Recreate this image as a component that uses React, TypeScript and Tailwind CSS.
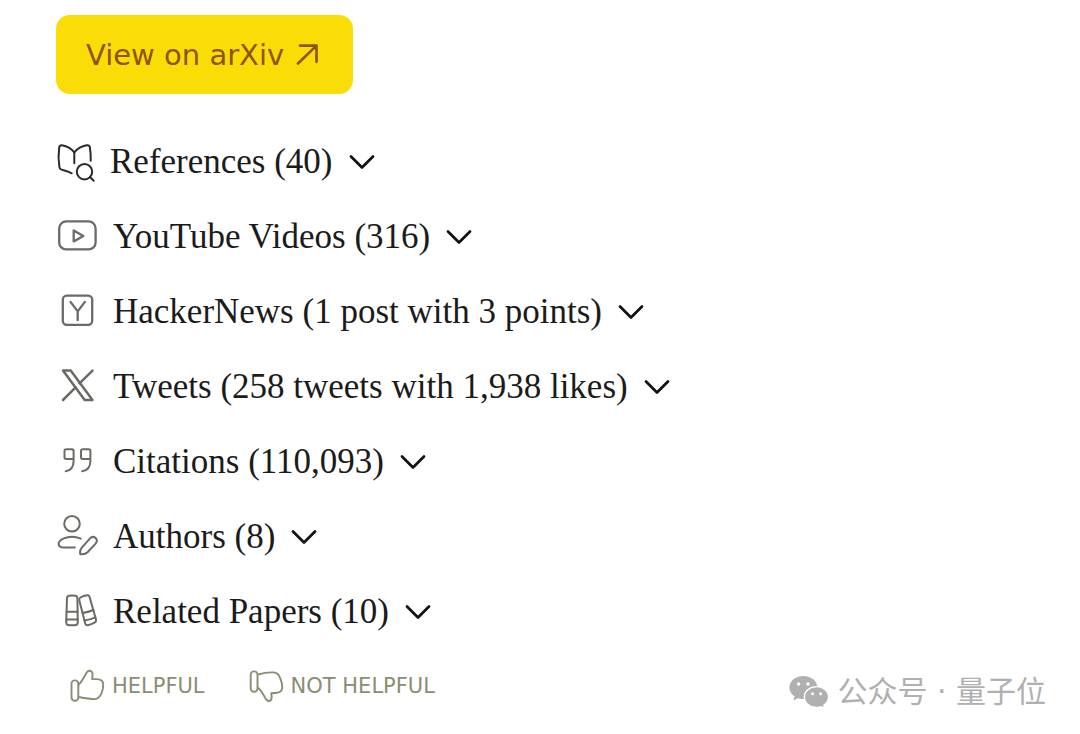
import type { ReactNode } from 'react'

type Section = {
  label: string
  icon: ReactNode
  dark?: boolean
}

const SECTIONS: Section[] = [
  {
    label: 'References (40)',
    dark: true,
    icon: (
      <>
        <path d="M15.7 33.3 C12 31 8 30.6 5 29.4 Q3.6 28.8 3.4 27 C2.2 20 2.3 14 3.2 7.5 Q3.6 5 6 5.2 C10.5 6 15 8.2 18.3 12.3 C21.6 8.2 26 6 30.7 5.2 Q33.4 4.8 33.9 7.4 C34.6 12 34.9 16 34.7 20.7" />
        <path d="M18.3 12.3 V23.3" />
        <circle cx="28.5" cy="31.7" r="7.7" />
        <path d="M34 37 L37.7 40.7" />
      </>
    ),
  },
  {
    label: 'YouTube Videos (316)',
    icon: (
      <g strokeWidth="2.3">
        <rect x="3.2" y="6.4" width="36.4" height="28" rx="7" />
        <path d="M17.7 15.4 V26.4 L27.3 20.9 Z" />
      </g>
    ),
  },
  {
    label: 'HackerNews (1 post with 3 points)',
    icon: (
      <g strokeWidth="2.3">
        <rect x="6.8" y="5.6" width="29.4" height="29.2" rx="4" />
        <path d="M14.5 11.9 L21.7 21.4 L28.9 11.9 M21.7 21.4 V30.2" />
      </g>
    ),
  },
  {
    label: 'Tweets (258 tweets with 1,938 likes)',
    icon: (
      <g strokeWidth="2.5">
        <path d="M7 5.6 H14.7 L36.5 35 H28.7 Z" />
        <path d="M36.5 5.6 L23.5 18.4 M7 35 L19.6 22.4" />
      </g>
    ),
  },
  {
    label: 'Citations (110,093)',
    icon: (
      <>
        <path d="M17.6 18.9 H10.2 Q8.5 18.9 8.5 17.2 V11 Q8.5 9.2 10.2 9.2 H15.9 Q17.6 9.2 17.6 11 V21 C17.6 27.5 15 30.4 9.7 31.2" />
        <path d="M34.4 18.9 H26.7 Q25 18.9 25 17.2 V11 Q25 9.2 26.7 9.2 H32.7 Q34.4 9.2 34.4 11 V21 C34.4 27.5 31.6 30.4 26.2 31.2" />
      </>
    ),
  },
  {
    label: 'Authors (8)',
    icon: (
      <>
        <circle cx="16" cy="8.8" r="7.8" />
        <path d="M24.7 23.6 C19 21.2 13 21.2 8 23.3 C4.5 24.8 2.6 26.6 2.6 28.8 C2.6 31.4 4.4 32.6 8 32.6 H18.8" />
        <path d="M24.3 39.2 C23.8 36.8 24.2 34.6 25.8 32.6 L33.8 23.6 C35.6 21.6 38 21.6 39.6 23 C41.2 24.5 41.2 26.6 39.6 28.6 L31.8 37 C30 38.8 27.2 39.6 24.3 39.2 Z" />
      </>
    ),
  },
  {
    label: 'Related Papers (10)',
    icon: (
      <>
        <path d="M11 8 Q11.1 6.2 12.8 5.8 Q16 5 19.6 5.8 Q21.3 6.2 21.4 8 L21.8 32.6 Q21.8 34.5 20 34.9 Q16 35.8 12 34.9 Q10.2 34.5 10.2 32.6 Z" />
        <path d="M10.6 21.8 H21.6 M10.4 29.6 H21.7" />
        <path d="M23.3 10.2 Q22.9 8.4 24.4 7.5 Q27.6 5.6 31.2 5.2 Q33 5 33.5 6.8 L40 29.6 Q40.4 31.4 38.9 32.3 Q35.5 34.4 31.6 35.2 Q29.8 35.4 29.3 33.7 Z" />
        <path d="M26.5 23 Q32 22.3 37.4 20 M28.4 30.4 Q34 29.8 39.4 27.4" />
      </>
    ),
  },
]

function SectionRow({ label, icon, dark }: Section) {
  return (
    <button
      type="button"
      aria-expanded={false}
      className="flex h-[75px] cursor-pointer items-center text-left"
    >
      <svg
        viewBox="0 0 42 43"
        fill="none"
        strokeWidth="2"
        strokeLinecap="round"
        strokeLinejoin="round"
        aria-hidden="true"
        className={`h-[43px] w-[42px] shrink-0 ${dark ? 'stroke-[#2a2a2a]' : 'stroke-[#6b6a65]'}`}
      >
        {icon}
      </svg>
      <span className={`text-[35px] leading-10 text-[#1b1b1b] ${dark ? 'ml-3' : 'ml-[15px]'}`}>{label}</span>
      <svg
        viewBox="0 0 26 16"
        fill="none"
        strokeWidth="2.7"
        strokeLinecap="round"
        strokeLinejoin="round"
        aria-hidden="true"
        className="ml-4 h-4 w-[26px] shrink-0 stroke-[#111111]"
      >
        <path d="M2 2.5 L13 13.5 L24 2.5" />
      </svg>
    </button>
  )
}

function VoteButton({ label, children }: { label: string; children: ReactNode }) {
  return (
    <button type="button" className="flex cursor-pointer items-center gap-[7px] text-[#8b8d72]">
      <svg
        viewBox="0 0 35 36"
        fill="none"
        stroke="currentColor"
        strokeWidth="1.9"
        strokeLinejoin="round"
        aria-hidden="true"
        className="h-9 w-[35px] shrink-0"
      >
        {children}
      </svg>
      <span className="font-['DejaVu_Sans',sans-serif] text-[21px] leading-7">{label}</span>
    </button>
  )
}

function Watermark() {
  return (
    <div className="flex items-center gap-2 pt-2 text-[#b0b0b0]">
      <svg viewBox="0 0 40 36" aria-hidden="true" className="h-9 w-10 shrink-0" fill="currentColor">
        <path d="M14.4 2 C6.6 2 0.4 7 0.4 13.6 C0.4 17.4 2.4 20.4 5.6 22.6 L4.4 26.6 L9 24.2 C10.8 24.8 12.5 25.1 14.4 25.1 C22.2 25.1 28.4 20 28.4 13.6 C28.4 7 22.2 2 14.4 2 Z" />
        <path
          d="M27.6 12.6 C20.8 12.6 15.4 17.2 15.4 23 C15.4 28.9 20.8 33.4 27.6 33.4 C29.2 33.4 30.7 33.1 32.1 32.7 L35.8 34.6 L34.8 31.3 C37.7 29.3 39.6 26.4 39.6 23 C39.6 17.2 34.3 12.6 27.6 12.6 Z"
          stroke="#ffffff"
          strokeWidth="1.4"
        />
        <g fill="#ffffff">
          <circle cx="9.6" cy="10" r="1.7" />
          <circle cx="19" cy="10" r="1.7" />
          <circle cx="23.6" cy="19.8" r="1.5" />
          <circle cx="31.6" cy="19.8" r="1.5" />
        </g>
      </svg>
      <span className="font-['DejaVu_Sans','Noto_Sans_CJK_SC',sans-serif] text-[30px] leading-10">公众号 · 量子位</span>
    </div>
  )
}

export default function App() {
  return (
    <main className="bg-white pt-[15px] pr-[34px] pl-14 font-['Liberation_Serif',serif]">
      <a
        href="#arxiv"
        className="inline-flex h-[79px] items-center gap-3 rounded-[14px] bg-[#fadd07] pr-[33px] pl-[30px] align-top text-[#8f5310]"
      >
        <span className="font-['DejaVu_Sans',sans-serif] text-[29px] leading-10">View on arXiv</span>
        <svg
          viewBox="0 0 24 24"
          fill="none"
          stroke="currentColor"
          strokeWidth="2.7"
          strokeLinecap="round"
          strokeLinejoin="round"
          aria-hidden="true"
          className="size-6"
        >
          <path d="M2 20.5 L20.5 2.6 M4 2.6 H20.5 V18.8" />
        </svg>
      </a>

      <div className="mt-[30px] flex flex-col items-start">
        {SECTIONS.map((section) => (
          <SectionRow key={section.label} {...section} />
        ))}
      </div>

      <footer className="mt-[15px] flex items-start justify-between">
        <div className="ml-[14px] flex gap-11 pt-1">
          <VoteButton label="HELPFUL">
            <rect x="1.5" y="12.4" width="6.8" height="20.4" rx="3.2" />
            <path d="M8.5 17 C11.5 14 13.4 10.2 15.6 6.4 C16.8 4 17.8 2.8 19.4 2.8 C21.4 2.8 22.7 4.4 22.6 6.6 C22.5 8.4 22.1 9.6 22.1 11.1 H26.5 C31 11.1 33.2 13 33.2 16.6 C33.2 19.8 32.9 22.4 31.6 25.2 C29.8 29.2 28.4 31 25 31.1 C19.4 31.2 13.8 30 8.5 28.9" />
          </VoteButton>
          <VoteButton label="NOT HELPFUL">
            <rect x="1.7" y="3.4" width="6.8" height="20.4" rx="3.2" />
            <path d="M8.7 6.6 C14 5 19.4 4.2 24.4 4.4 C27.6 4.6 29.8 6.4 31 9.6 C32.4 13 33.4 16 33.3 19.2 C33.2 22.6 31.2 24.4 28 24.7 L22.3 25.2 C22.3 26.8 22.8 28.2 22.6 29.8 C22.4 31.8 21.4 33 19.8 33 C17.8 33 17 31.6 16 29.6 C14 25.6 12 22 8.7 19.4" />
          </VoteButton>
        </div>
        <Watermark />
      </footer>
    </main>
  )
}
